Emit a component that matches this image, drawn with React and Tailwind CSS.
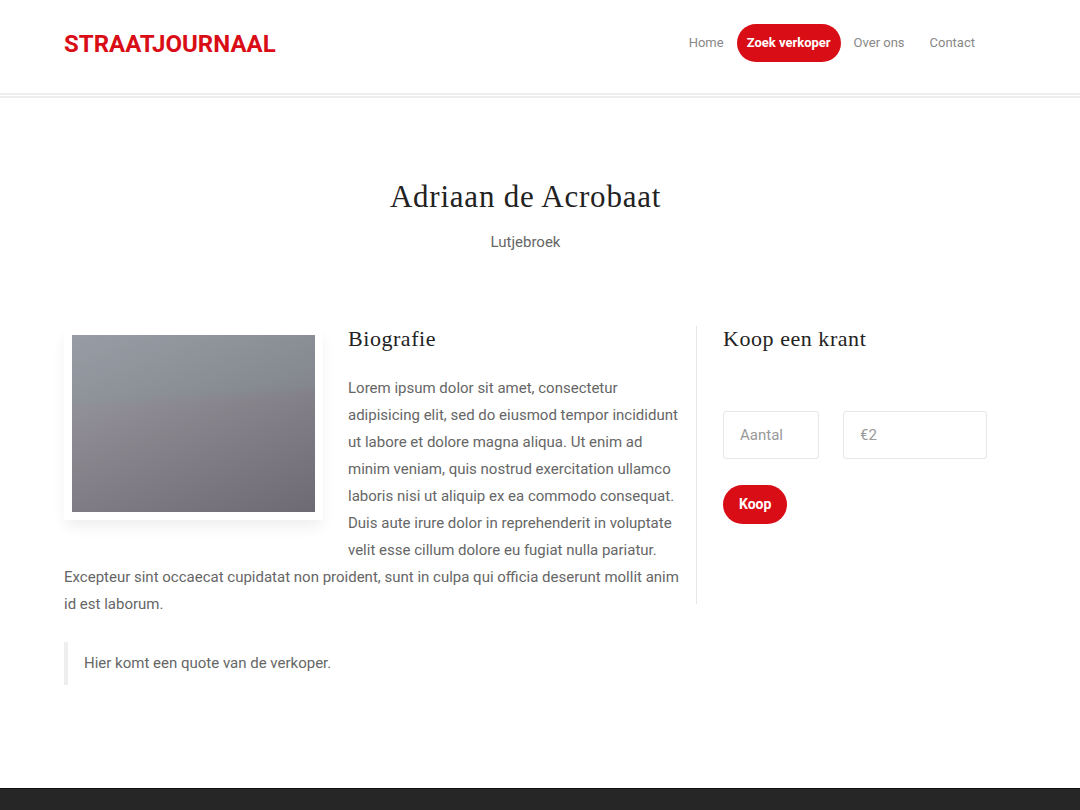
const links = [
  { label: "Home" },
  { label: "Zoek verkoper", active: true },
  { label: "Over ons" },
  { label: "Contact" },
];

function Header() {
  return (
    <header className="flex items-start justify-between border-b-[5px] border-double border-[#eeeeee] pt-6 pr-[93px] pb-[29px] pl-16">
      <a href="#" className="text-[24px] leading-10 font-bold text-[#d90d16] uppercase">
        Straatjournaal
      </a>
      <nav className="flex items-center gap-px">
        {links.map((link) => (
          <a
            key={link.label}
            href="#"
            aria-current={link.active ? "page" : undefined}
            className={
              link.active
                ? "rounded-[19px] bg-[#d90d16] px-[10px] text-[13px] leading-[38px] font-bold text-white"
                : "px-3 text-[13px] leading-[38px] text-[#888888]"
            }
          >
            {link.label}
          </a>
        ))}
      </nav>
    </header>
  );
}

function Portrait() {
  return (
    <div className="float-left mt-[1px] mr-[25px] mb-6 w-[259px] bg-white p-2 shadow-[0_8px_14px_-2px_rgba(0,0,0,0.07)]">
      <div
        role="img"
        aria-label="Adriaan de Acrobaat"
        className="h-[177px] bg-[linear-gradient(176deg,rgba(130,155,160,0.22)_0%,rgba(130,155,160,0.22)_34%,transparent_40%),linear-gradient(158deg,#9e9da6_0%,#86838b_50%,#6d6a74_100%)]"
      />
    </div>
  );
}

function OrderForm() {
  const field =
    "h-12 min-w-0 rounded-[3px] border border-[#e6e6e6] bg-white px-4 text-[15px] text-[#666666] placeholder:text-[#999999] outline-none focus:border-[#999999]";
  return (
    <form className="mt-[59px]" onSubmit={(e) => e.preventDefault()}>
      <div className="grid grid-cols-[2fr_3fr] gap-6">
        <input aria-label="Aantal" placeholder="Aantal" className={field} />
        <input aria-label="Prijs" placeholder="€2" className={field} />
      </div>
      <button
        type="submit"
        className="mt-[26px] rounded-[20px] bg-[#d90d16] px-4 text-[14px] leading-[39px] font-bold text-white"
      >
        Koop
      </button>
    </form>
  );
}

export default function App() {
  const subheading = "font-['Liberation_Serif',serif] text-[22px] leading-[26px] tracking-wide text-[#222222]";
  return (
    <div className="flex min-h-screen flex-col bg-white font-[Roboto,sans-serif] text-[15px] leading-[27px] text-[#666666]">
      <Header />
      <main className="grow pt-[79px] pr-[93px] pb-[103px] pl-16">
        <div className="text-center">
          <h1 className="font-['Liberation_Serif',serif] text-[31px] leading-10 tracking-wide text-[#222222]">
            Adriaan de Acrobaat
          </h1>
          <p className="mt-3">Lutjebroek</p>
        </div>
        <div className="mt-[70px] flex items-start">
          <article className="min-w-0 flex-1">
            <Portrait />
            <h2 className={subheading}>Biografie</h2>
            <p className="mt-[23px]">
              Lorem ipsum dolor sit amet, consectetur adipisicing elit, sed do eiusmod tempor
              incididunt ut labore et dolore magna aliqua. Ut enim ad minim veniam, quis nostrud
              exercitation ullamco laboris nisi ut aliquip ex ea commodo consequat. Duis aute irure
              dolor in reprehenderit in voluptate velit esse cillum dolore eu fugiat nulla pariatur.
              Excepteur sint occaecat cupidatat non proident, sunt in culpa qui officia deserunt
              mollit anim id est laborum.
            </p>
            <blockquote className="mt-6 border-l-4 border-[#eeeeee] py-2 pl-4">
              Hier komt een quote van de verkoper.
            </blockquote>
          </article>
          <aside className="ml-[14px] min-h-[278px] w-[291px] border-l border-[#e6e6e6] pl-[26px]">
            <h2 className={subheading}>Koop een krant</h2>
            <OrderForm />
          </aside>
        </div>
      </main>
      <footer className="h-[22px] border-t border-[#111111] bg-[#262626]" />
    </div>
  );
}
